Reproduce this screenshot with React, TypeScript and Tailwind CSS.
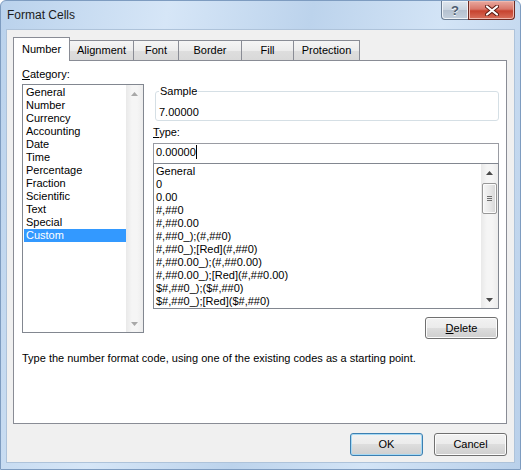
import React from "react";

const categories = [
  "General",
  "Number",
  "Currency",
  "Accounting",
  "Date",
  "Time",
  "Percentage",
  "Fraction",
  "Scientific",
  "Text",
  "Special",
  "Custom",
];

const formats = [
  "General",
  "0",
  "0.00",
  "#,##0",
  "#,##0.00",
  "#,##0_);(#,##0)",
  "#,##0_);[Red](#,##0)",
  "#,##0.00_);(#,##0.00)",
  "#,##0.00_);[Red](#,##0.00)",
  "$#,##0_);($#,##0)",
  "$#,##0_);[Red]($#,##0)",
];

// label, width (tabs overlap by one pixel)
const tabs: [string, number][] = [
  ["Number", 57],
  ["Alignment", 65],
  ["Font", 46],
  ["Border", 64],
  ["Fill", 53],
  ["Protection", 67],
];

function Arrow({ up, color }: { up: boolean; color: string }) {
  return (
    <svg width="7" height="4" viewBox="0 0 7 4">
      <path d={up ? "M0 4 L3.5 0 L7 4 Z" : "M0 0 L3.5 4 L7 0 Z"} fill={color} />
    </svg>
  );
}

function ScrollBar({ enabled }: { enabled: boolean }) {
  const color = enabled ? "#4a4a4a" : "#a8a8a8";
  return (
    <div className="w-[17px] h-full flex flex-col shrink-0 bg-[linear-gradient(90deg,#e9e9e9,#f5f5f5_35%,#f5f5f5_65%,#ececec)]">
      <div className="h-[17px] flex items-center justify-center">
        <Arrow up color={color} />
      </div>
      {enabled && (
        <div className="mt-[2px] mx-[1px] h-[31px] rounded-[2px] border border-[#979797] bg-[linear-gradient(90deg,#f6f6f6,#e9e9e9_50%,#d6d6d6)] shadow-[inset_0_0_0_1px_#fbfbfb] flex flex-col items-center justify-center gap-[1px]">
          <div className="w-[5px] h-px bg-[#6f6f6f]" />
          <div className="w-[5px] h-px bg-[#6f6f6f]" />
          <div className="w-[5px] h-px bg-[#6f6f6f]" />
        </div>
      )}
      <div className="flex-1" />
      <div className="h-[17px] flex items-center justify-center">
        <Arrow up={false} color={color} />
      </div>
    </div>
  );
}

function Button({
  children,
  primary = false,
  className = "",
}: {
  children: React.ReactNode;
  primary?: boolean;
  className?: string;
}) {
  return (
    <div
      className={`w-[73px] flex items-center justify-center rounded-[3px] border bg-[linear-gradient(#f2f2f2_0%,#ebebeb_50%,#dddddd_50%,#cfcfcf_100%)] ${
        primary
          ? "border-[#3c7fb1] shadow-[inset_0_0_0_1px_#a6d9f4]"
          : "border-[#707070] shadow-[inset_0_0_0_1px_#fcfcfc]"
      } ${className}`}
    >
      {children}
    </div>
  );
}

export default function App() {
  return (
    <div className="w-[521px] h-[470px] flex flex-col overflow-hidden rounded-t-[6px] border border-[#7e9cc0] bg-[linear-gradient(100deg,#bad2ec_0%,#d6e6f7_28%,#bcd3ec_52%,#d3e4f6_74%,#b9d0ea_100%)] font-['Liberation_Sans',sans-serif] text-[11px] leading-[13px] text-black">
      {/* Title bar */}
      <div className="h-[29px] flex items-center shrink-0">
        <span className="ml-[6px] text-[12px] leading-[15px] text-[#1b1b1b]">Format Cells</span>
        <div className="ml-auto mr-[5px] self-start flex h-[19px]">
          <div className="w-[27px] h-full rounded-bl-[4px] border border-t-0 border-r-0 border-[#6b7d94] bg-[linear-gradient(#dfe6ee,#c9d3df_50%,#b4c0cf_50%,#c3cfdc)] shadow-[inset_0_0_0_1px_#eef3f8] flex items-center justify-center">
            <span className="text-[13px] leading-[13px] font-bold text-[#4b5a6d] [text-shadow:0_1px_0_#ffffff]">?</span>
          </div>
          <div className="w-[47px] h-full rounded-br-[4px] border border-t-0 border-[#6e2a22] bg-[linear-gradient(#e9a99f,#d9776a_45%,#c7432f_55%,#d8705c)] shadow-[inset_0_0_0_1px_#f0b8ae] flex items-center justify-center">
            <svg width="14" height="11" viewBox="0 0 14 11">
              <path
                d="M2 1.5 L12 9.5 M12 1.5 L2 9.5"
                stroke="#5a1a12"
                strokeWidth="4"
                strokeLinecap="round"
              />
              <path
                d="M2 1.5 L12 9.5 M12 1.5 L2 9.5"
                stroke="#ffffff"
                strokeWidth="2.2"
                strokeLinecap="round"
              />
            </svg>
          </div>
        </div>
      </div>

      {/* Client area */}
      <div className="mx-[6px] h-[432px] shrink-0 bg-[#f0f0f0] shadow-[0_0_0_1px_#aec3da] flex flex-col pl-[6px] pt-[7px]">
        {/* Tabs */}
        <div className="relative z-10 h-[24px] -mb-px flex items-end">
          {tabs.map(([label, w], i) =>
            i === 0 ? (
              <div
                key={label}
                style={{ width: w }}
                className="h-[24px] border border-b-0 border-[#898c95] bg-white flex items-center justify-center"
              >
                {label}
              </div>
            ) : (
              <div
                key={label}
                style={{ width: w }}
                className="h-[20px] mb-px -ml-px border border-b-0 border-[#898c95] bg-[linear-gradient(#f5f5f5,#ececec_50%,#dedede_50%,#d9d9d9)] flex items-center justify-center"
              >
                {label}
              </div>
            )
          )}
        </div>

        {/* Panel */}
        <div className="w-[494px] h-[364px] border border-[#898c95] bg-white pl-[8px] pt-[7px]">
          <div className="flex items-start">
            {/* Category */}
            <div className="w-[122px] flex flex-col">
              <div>
                <span className="underline">C</span>ategory:
              </div>
              <div className="mt-[3px] h-[249px] border border-[#828790] flex">
                <div className="flex-1 pt-[1px] pl-[1px]">
                  {categories.map((c) => (
                    <div
                      key={c}
                      className={`h-[13px] pl-[2px] whitespace-nowrap ${
                        c === "Custom" ? "bg-[#3399ff] text-white" : ""
                      }`}
                    >
                      {c}
                    </div>
                  ))}
                </div>
                <ScrollBar enabled={false} />
              </div>
            </div>

            {/* Sample / Type */}
            <div className="ml-[9px] w-[346px] flex flex-col">
              <fieldset className="mt-[17px] ml-[2px] h-[36px] border border-[#d5dfe5] rounded-[3px] px-[3px]">
                <legend className="px-[1px]">Sample</legend>
                <div className="mt-[8px]">7.00000</div>
              </fieldset>
              <div className="mt-[5px]">
                <span className="underline">T</span>ype:
              </div>
              <div className="mt-[4px] h-[20px] border border-b-0 border-[#9a9ca3] pl-[2px] pt-[2px] flex items-start">
                <span>0.00000</span>
                <span className="w-px h-[14px] bg-black -mt-[1px]" />
              </div>
              <div className="h-[146px] border border-[#828790] flex">
                <div className="flex-1 pt-[1px] pl-[2px] overflow-hidden">
                  {formats.map((f) => (
                    <div key={f} className="h-[13px] whitespace-nowrap">
                      {f}
                    </div>
                  ))}
                </div>
                <ScrollBar enabled />
              </div>
              <Button className="mt-[8px] h-[22px] self-end mr-[1px]">
                <span>
                  <span className="underline">D</span>elete
                </span>
              </Button>
            </div>
          </div>

          <div className="mt-[13px]">
            Type the number format code, using one of the existing codes as a starting point.
          </div>
        </div>

        {/* Dialog buttons */}
        <div className="mt-[9px] mr-[7px] flex justify-end gap-[11px]">
          <Button primary className="h-[23px]">
            OK
          </Button>
          <Button className="h-[23px]">Cancel</Button>
        </div>
      </div>
    </div>
  );
}
